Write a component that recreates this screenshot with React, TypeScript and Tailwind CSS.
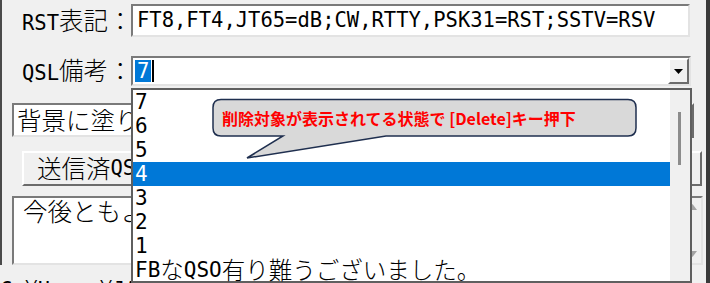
import React from "react"

// splits a string into ascii / non-ascii runs so each can get its own font
const runs = (s: string) => s.match(/[\x00-\x7f]+|[^\x00-\x7f]+/g) || []

interface MixedProps {
  text: string
  ascii: string
  cjk: string
}

const Mixed: React.FunctionComponent<MixedProps> = ({ text, ascii, cjk }) => (
  <>
    {runs(text).map((part, i) =>
      /[\x00-\x7f]/.test(part[0]) ? (
        <span key={i} className={ascii}>
          {part}
        </span>
      ) : (
        <span key={i} className={cjk}>
          {part}
        </span>
      ),
    )}
  </>
)

const ASCII = "whitespace-pre font-['DejaVu_Sans_Mono',monospace] text-[20.5px]"
const CJK = "font-['Noto_Sans_CJK_JP',sans-serif] font-light text-[24.5px]"
const LIST_ASCII = "whitespace-pre font-['DejaVu_Sans_Mono',monospace] text-[21px]"
const LIST_CJK = "font-['Noto_Sans_CJK_JP',sans-serif] font-light text-[23.5px]"

const sunken =
  "border-2 border-t-[#7a7a7a] border-l-[#7a7a7a] border-b-[#e3e3e3] border-r-[#e3e3e3] bg-white"
const raised =
  "border-2 border-t-white border-l-white border-b-[#6b6b6b] border-r-[#6b6b6b] bg-[#f0f0f0]"

const items = ["7", "6", "5", "4", "3", "2", "1", "FBなQSO有り難うございました。"]

const App = () => {
  return (
    <div className="relative h-[283px] w-[710px] overflow-hidden border-r-[4px] border-[#3a3a3a] bg-[#f0f0f0] leading-none text-black">
      {/* window body */}
      <div className="flex h-[265px] flex-col overflow-hidden border-l-2 border-[#4a4a4a]">
        <div className="mt-[4px] flex items-center whitespace-nowrap">
          <div className="w-[129px] shrink-0 overflow-visible pl-[20px]">
            <Mixed text="RST表記：" ascii={ASCII} cjk={CJK} />
          </div>
          <div className={`flex h-[33px] w-[559px] shrink-0 items-center pl-[4px] ${sunken}`}>
            <Mixed text="FT8,FT4,JT65=dB;CW,RTTY,PSK31=RST;SSTV=RSV" ascii={ASCII} cjk={CJK} />
          </div>
        </div>

        <div className="mt-[19px] flex items-center whitespace-nowrap">
          <div className="w-[129px] shrink-0 pl-[20px]">
            <Mixed text="QSL備考：" ascii={ASCII} cjk={CJK} />
          </div>
          <div className={`flex h-[30px] w-[560px] shrink-0 items-center ${sunken}`}>
            <div className="ml-[2px] flex h-[22px] items-center bg-[#0078d7] px-[2px] text-white">
              <span className={ASCII}>7</span>
            </div>
            <div className="ml-[1px] h-[22px] w-[2px] bg-black" />
            <div className="flex-1" />
            <div className={`flex h-[26px] w-[21px] items-center justify-center ${raised}`}>
              <svg width="9" height="5" viewBox="0 0 9 5">
                <path d="M0 0H9L4.5 5Z" fill="#000" />
              </svg>
            </div>
          </div>
        </div>

        <div className="mt-[17px] flex whitespace-nowrap pl-[10px]">
          <div className={`flex h-[34px] w-[580px] shrink-0 items-center overflow-hidden pl-[3px] ${sunken}`}>
            <Mixed text="背景に塗りつぶし色を使用する" ascii={ASCII} cjk={CJK} />
          </div>
          <div className={`ml-[8px] h-[35px] w-[94px] shrink-0 ${raised}`} />
        </div>

        <div className="mt-[13px] whitespace-nowrap pl-[20px]">
          <div className={`flex h-[35px] w-[680px] items-center pl-[13px] ${raised}`}>
            <Mixed text="送信済QSLカードを表示" ascii={ASCII} cjk={CJK} />
          </div>
        </div>

        <div className="mt-[10px] whitespace-nowrap pl-[10px]">
          <div className={`flex h-[69px] w-[691px] ${sunken}`}>
            <div className="flex-1 pl-[9px] pt-[1px]">
              <Mixed text="今後ともよろしくお願いします。" ascii={ASCII} cjk={CJK} />
            </div>
            <div className="flex w-[17px] flex-col items-center justify-between bg-[#f0f0f0] py-[6px]">
              <svg width="9" height="6" viewBox="0 0 9 6">
                <path d="M0 6H9L4.5 0Z" fill="#a3a3a3" />
              </svg>
              <svg width="9" height="6" viewBox="0 0 9 6">
                <path d="M0 0H9L4.5 6Z" fill="#a3a3a3" />
              </svg>
            </div>
          </div>
        </div>
      </div>

      <div className="whitespace-nowrap pt-[10px]">
        <Mixed text="C:¥Users¥JA1¥Documents¥QSL¥" ascii={ASCII} cjk={CJK} />
      </div>

      {/* open drop-down list of the QSL備考 combo */}
      <div className="absolute left-[131px] top-[88px] flex h-[195px] w-[561px] border-2 border-[#5f5f5f] bg-white">
        <div className="flex flex-1 flex-col whitespace-nowrap">
          {items.map((item) => (
            <div
              key={item}
              className={`flex h-[24px] shrink-0 items-center pl-[2px] ${
                item === "4" ? "bg-[#0078d7] text-white" : ""
              }`}
            >
              <Mixed text={item} ascii={LIST_ASCII} cjk={LIST_CJK} />
            </div>
          ))}
        </div>
        <div className="w-[20px] bg-[#f0f0f0] pl-[8px] pt-[22px]">
          <div className="h-[53px] w-[3px] bg-[#8c8c8c]" />
        </div>
      </div>

      {/* callout */}
      <svg className="pointer-events-none absolute left-0 top-0" width="710" height="283" viewBox="0 0 710 283">
        <path
          d="M221 99.5H628Q636 99.5 636 107.5V128Q636 136 628 136H386L247 158L283 136H221Q213 136 213 128V107.5Q213 99.5 221 99.5Z"
          fill="#d9d9d9"
          stroke="#1f2f4f"
          strokeWidth="1.5"
        />
      </svg>
      <div className="absolute left-[213px] top-[99px] flex h-[37px] w-[423px] items-center whitespace-nowrap pl-[9px] font-['Noto_Sans_CJK_JP',sans-serif] text-[16px] font-bold text-[#ff0000]">
        削除対象が表示されてる状態で [Delete]キー押下
      </div>
    </div>
  )
}

export default App
